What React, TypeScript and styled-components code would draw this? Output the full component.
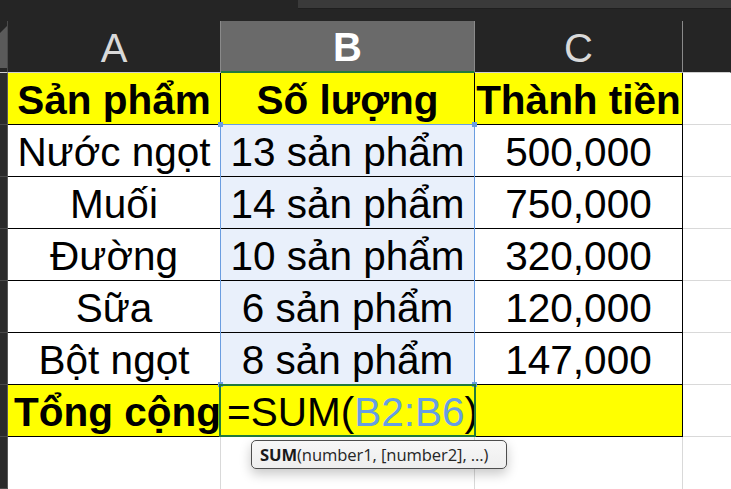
import React from "react";
import styled, { createGlobalStyle, css } from "styled-components";

const Global = createGlobalStyle`
  html, body { margin: 0; padding: 0; background: #ffffff; }
  body { font-family: "Liberation Sans", Arial, sans-serif; overflow: hidden; }
  #root { width: 731px; height: 489px; overflow: hidden; }
`;

const Page = styled.div`
  width: 731px;
  height: 489px;
  display: flex;
  flex-direction: column;
  background: #ffffff;
`;

const TopBar = styled.div`
  height: 22px;
  background: #252525;
  display: flex;
  justify-content: flex-end;
  align-items: flex-start;
`;

const TopStrip = styled.div`
  width: 433px;
  height: 8px;
  background: #3a3a3a;
  border-bottom: 1px solid #1f1f1f;
`;

const Sheet = styled.div`
  position: relative;
  display: grid;
  grid-template-columns: 8px 213px 254px 208px 1fr;
  grid-auto-rows: 52px;
`;

const Corner = styled.div`
  background: #252525;
  border-right: 1px solid #4a4a4a;
  border-bottom: 1px solid #cfcfcf;
  box-sizing: border-box;
  display: flex;
  align-items: flex-start;
`;

const RowHead = styled.div`
  background: #2b2b2b;
  border-right: 1px solid #5a5a5a;
  border-bottom: 1px solid #4a4a4a;
  box-sizing: border-box;
`;

const ColHead = styled.div<{ $active?: boolean; $last?: boolean }>`
  box-sizing: border-box;
  display: flex;
  align-items: flex-end;
  justify-content: center;
  padding-bottom: 4px;
  font-size: 40px;
  line-height: 1;
  background: ${(p) => (p.$active ? "#6a6a6a" : "#252525")};
  color: ${(p) => (p.$active ? "#ffffff" : "#d9d9d9")};
  font-weight: ${(p) => (p.$active ? 700 : 400)};
  border-right: 1px solid ${(p) => (p.$last ? "#252525" : "#8a8a8a")};
  border-bottom: ${(p) => (p.$active ? "2px solid #217a3c" : "1px solid #d0d0d0")};
`;

type CellProps = {
  $fill?: "yellow" | "blue" | "white";
  $bold?: boolean;
  $align?: "left" | "center";
  $grid?: boolean;
  $front?: boolean;
};

const Cell = styled.div<CellProps>`
  box-sizing: border-box;
  display: flex;
  align-items: flex-end;
  justify-content: ${(p) => (p.$align === "left" ? "flex-start" : "center")};
  padding: 0 0 4px ${(p) => (p.$align === "left" ? "6px" : "0")};
  font-size: 40.5px;
  line-height: 1;
  white-space: nowrap;
  color: #000000;
  font-weight: ${(p) => (p.$bold ? 700 : 400)};
  background: ${(p) =>
    p.$fill === "yellow" ? "#ffff00" : p.$fill === "blue" ? "#e9f0fb" : "#ffffff"};
  ${(p) =>
    p.$grid
      ? css`
          border-bottom: 1px solid #d9d9d9;
        `
      : css`
          border-right: 1px solid #000000;
          border-bottom: 1px solid #000000;
        `}
  ${(p) =>
    p.$front &&
    css`
      position: relative;
      z-index: 1;
    `}
`;

const EmptyCell = styled.div<{ $noRight?: boolean }>`
  box-sizing: border-box;
  background: #ffffff;
  border-right: ${(p) => (p.$noRight ? "none" : "1px solid #d9d9d9")};
`;

const Ref = styled.span`
  color: #679ee2;
`;

const Selection = styled.div`
  position: absolute;
  left: 220px;
  top: 103px;
  width: 255px;
  height: 261px;
  border: 1px solid #6a9de0;
  box-sizing: border-box;
  pointer-events: none;
  z-index: 2;
`;

const Handle = styled.span<{ $x: "l" | "r"; $y: "t" | "b" }>`
  position: absolute;
  width: 5px;
  height: 5px;
  background: #6a9de0;
  ${(p) => (p.$x === "l" ? "left: -3px;" : "right: -3px;")}
  ${(p) => (p.$y === "t" ? "top: -3px;" : "bottom: -3px;")}
`;

const ActiveCell = styled.div`
  position: absolute;
  left: 219px;
  top: 363px;
  width: 257px;
  height: 53px;
  border: 2px solid #217a3c;
  box-sizing: border-box;
  pointer-events: none;
  z-index: 3;
`;

const Tooltip = styled.div`
  position: absolute;
  left: 251px;
  top: 419px;
  width: 256px;
  height: 29px;
  box-sizing: border-box;
  padding: 0 0 1px 8px;
  display: flex;
  align-items: center;
  background: linear-gradient(#f7f7f7, #eeeeee);
  border: 1.5px solid #4d4d4d;
  border-radius: 5px;
  box-shadow: 0 5px 12px rgba(0, 0, 0, 0.22);
  font-family: "Open Sans", "Noto Sans", sans-serif;
  font-size: 16.6px;
  letter-spacing: -0.1px;
  color: #262626;
  white-space: nowrap;
  z-index: 4;
`;

const Fn = styled.b`
  font-weight: 700;
  color: #1a1a1a;
`;

const rows: [string, string, string][] = [
  ["Nước ngọt", "13 sản phẩm", "500,000"],
  ["Muối", "14 sản phẩm", "750,000"],
  ["Đường", "10 sản phẩm", "320,000"],
  ["Sữa", "6 sản phẩm", "120,000"],
  ["Bột ngọt", "8 sản phẩm", "147,000"],
];

export default function App() {
  return (
    <Page>
      <Global />
      <TopBar>
        <TopStrip />
      </TopBar>
      <Sheet>
        <Corner>
          <svg width="7" height="52" viewBox="0 0 7 52">
            <polygon points="0,12 7,5 7,47 0,47" fill="#5a5a5a" />
          </svg>
        </Corner>
        <ColHead>A</ColHead>
        <ColHead $active>B</ColHead>
        <ColHead>C</ColHead>
        <ColHead $last />

        <RowHead />
        <Cell $fill="yellow" $bold>Sản phẩm</Cell>
        <Cell $fill="yellow" $bold>Số lượng</Cell>
        <Cell $fill="yellow" $bold>Thành tiền</Cell>
        <Cell $grid />

        {rows.map(([a, b, c]) => (
          <React.Fragment key={a}>
            <RowHead />
            <Cell>{a}</Cell>
            <Cell $fill="blue">{b}</Cell>
            <Cell>{c}</Cell>
            <Cell $grid />
          </React.Fragment>
        ))}

        <RowHead />
        <Cell $fill="yellow" $bold $align="left">Tổng cộng</Cell>
        <Cell $fill="yellow" $align="left" $front>
          =SUM(<Ref>B2:B6</Ref>)
        </Cell>
        <Cell $fill="yellow" />
        <Cell $grid />

        <RowHead />
        <EmptyCell />
        <EmptyCell />
        <EmptyCell />
        <EmptyCell $noRight />

        <Selection>
          <Handle $x="l" $y="t" />
          <Handle $x="r" $y="t" />
          <Handle $x="l" $y="b" />
          <Handle $x="r" $y="b" />
        </Selection>
        <ActiveCell />
        <Tooltip>
          <Fn>SUM</Fn>(number1, [number2], ...)
        </Tooltip>
      </Sheet>
    </Page>
  );
}
